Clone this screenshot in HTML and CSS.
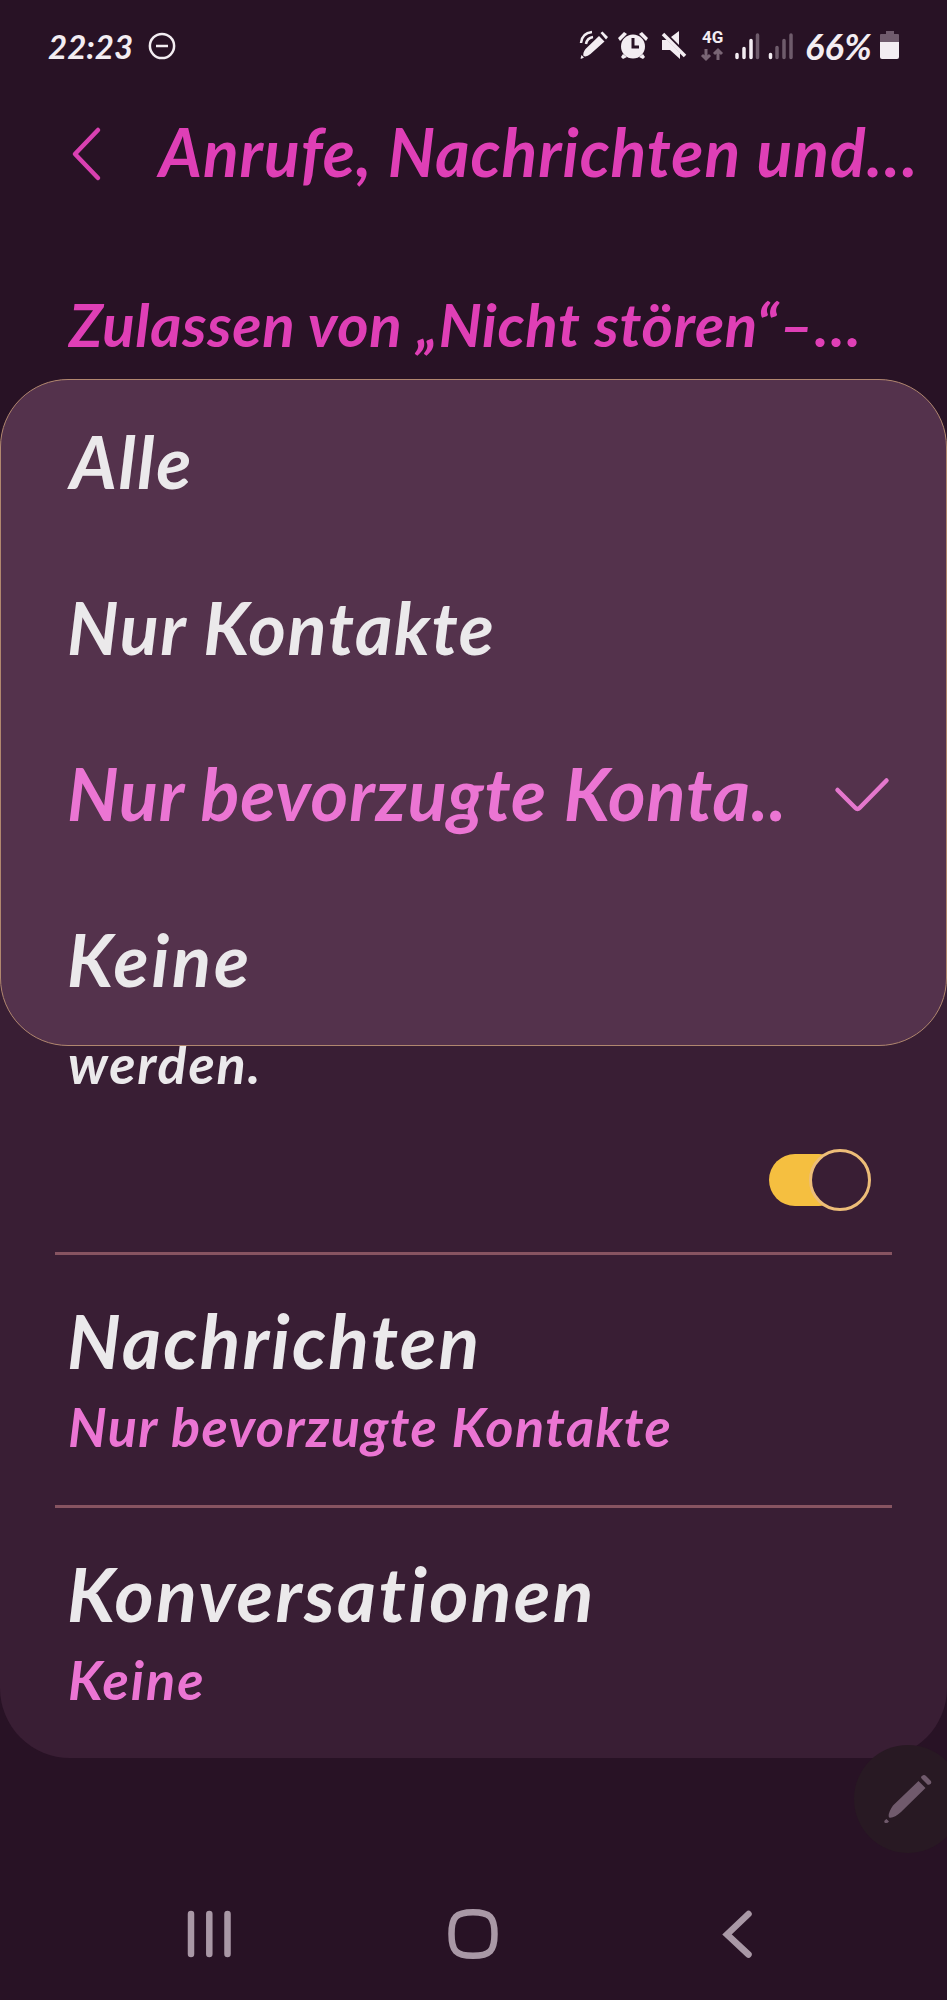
FILE: index.html
```html
<!DOCTYPE html>
<html lang="de">
<head>
<meta charset="utf-8">
<title>Anrufe, Nachrichten und Konversationen</title>
<link rel="stylesheet" href="styles.css">
</head>
<body>
<div class="screen">
  <header class="status">
    <span class="time">22:23</span>
    <svg class="dnd" width="28" height="28" viewBox="0 0 28 28"><circle cx="14" cy="14" r="12.1"/><path d="M8 14h12"/></svg>
    <svg class="status-icons" width="220" height="40" viewBox="580 25 220 40">
      <g class="fill">
        <path d="M600 35l5.500 5.500-14 12.500q-4 3.500-7 2-1-3 2-7zM601.500 32l2-1.500 5.500 5.500-2 2.500zM582.500 54l2.500 2.500q-2 1.500-3.500 1z"/>
        <circle cx="634" cy="45.500" r="12"/>
        <path d="M619 37l6-6 3 2-7 7zM649 37l-6-6-3 2 7 7zM624 53l4 3-4 2-2-2zM644 53l-4 3 4 2 2-2z"/>
        <path d="M663 39h5l13 13v6l-10-9h-8zM680 30v14l-8-8z"/>
      </g>
      <g class="wave"><path d="M582 42q1-10 11-11M587 43q1-6 7-7"/></g>
      <path class="clock" d="M634 37v9h6"/>
      <path class="slash" d="M664 33l22 22"/>
      <path class="dim" d="M707 48v10M703 54l4 4 4-4M719 59v-10M715 53l4-4 4 4"/>
      <path class="bars" d="M738 53.500v3M745 47.500v9M752 39.500v17M771.500 53.500v3"/>
      <path class="bars dim-bar" d="M758.500 34v22.500M778 46.500v10M785 39.500v17M792 34v22.500"/>
    </svg>
    <span class="network">4G</span>
    <span class="percent">66%</span>
    <svg class="battery" width="20" height="30" viewBox="0 0 20 30"><path class="empty" d="M6 1h8v3h4q1 0 1 1v8H0V5q0-1 1-1h5z"/><path class="level" d="M0 12h19v15q0 2-2 2H2q-2 0-2-2z"/></svg>
  </header>

  <div class="title-bar">
    <svg class="back" width="32" height="56" viewBox="0 0 32 56"><path d="M28 4L5 28l23 24"/></svg>
    <h1 class="title">Anrufe, Nachrichten und…</h1>
  </div>
  <h2 class="section">Zulassen von „Nicht stören“–…</h2>

  <main class="card">
    <p class="hint">werden.</p>
    <div class="switch-row"><span class="switch"><span class="track"></span><span class="knob"></span></span></div>
    <section class="entry">
      <div class="name messages">Nachrichten</div>
      <div class="value">Nur bevorzugte Kontakte</div>
    </section>
    <section class="entry last">
      <div class="name conversations">Konversationen</div>
      <div class="value none">Keine</div>
    </section>
  </main>

  <nav class="nav">
    <svg width="40" height="50" viewBox="0 0 40 50"><path d="M4 5v40M22.300 5v40M40.500 5v40"/></svg>
    <svg class="home" width="50" height="50" viewBox="0 0 50 50"><path d="M25 3.200C42 3.200 46.500 8 46.500 25S42 46.800 25 46.800 3.500 42 3.500 25 8 3.200 25 3.200z"/></svg>
    <svg width="30" height="50" viewBox="0 0 30 50"><path d="M24.500 5L3 25.500l21.500 20"/></svg>
  </nav>

  <div class="menu">
    <div class="option all">Alle</div>
    <div class="option contacts">Nur Kontakte</div>
    <div class="option selected"><span class="label">Nur bevorzugte Konta..</span>
      <svg width="56" height="40" viewBox="0 0 56 40"><path d="M2.500 17l18 18q2 2 4 0l27-27.500"/></svg>
    </div>
    <div class="option nobody">Keine</div>
  </div>

  <div class="pen">
    <svg width="52" height="52" viewBox="0 0 52 52"><path d="M35.500 8l7 7-24.500 24q-7 6.500-12 5.500q-1.500-4 4-12zM39 3q2-2 4 0l4.500 4.500q2 3-1 4-2 1-3-1l-4.500-4.500q-2-2 0-3zM3.500 46l2.500 2.500q-2 2.500-4.500 1-1-2 2-3.500z"/></svg>
  </div>
</div>
</body>
</html>
```
FILE: styles.css
```css
* { box-sizing: border-box; }
body { margin: 0; background: #281225; }
h1, h2, p { margin: 0; }
svg { display: block; flex: none; overflow: visible; }
.screen {
  position: relative;
  width: 947px;
  height: 2000px;
  overflow: hidden;
  display: flex;
  flex-direction: column;
  background: #281225;
  color: #ebe9eb;
  font-family: Lato, "Open Sans", sans-serif;
  font-style: italic;
  font-weight: 700;
  white-space: nowrap;
}

.status { height: 92px; display: flex; align-items: center; padding-left: 48px; color: #f3edf2; position: relative; }
.time { width: 100px; font-size: 33px; line-height: 40px; }
.dnd { fill: none; stroke: #f3edf2; stroke-width: 2.5; }
.status-icons { margin-left: 403px; fill: none; }
.fill { fill: #f3edf2; }
.wave { stroke: #f3edf2; stroke-width: 2.5; }
.clock { stroke: #281225; stroke-width: 3; }
.slash { stroke: #f3edf2; stroke-width: 3.5; }
.dim { stroke: #796575; stroke-width: 3; }
.bars { stroke: #f3edf2; stroke-width: 3.5; stroke-linecap: round; }
.dim-bar { stroke: #6e5b6b; }
.network { position: absolute; left: 702px; top: 26px; font: 700 17px/22px Roboto, sans-serif; }
.percent { margin-left: 6px; width: 75px; font-size: 36px; line-height: 44px; letter-spacing: .4px; }
.battery { margin-top: -2px; }
.battery .empty { fill: #705b6d; }
.battery .level { fill: #f3edf2; }

.title-bar { height: 158px; padding: 0 0 35px 70px; display: flex; align-items: center; }
.back { fill: none; stroke: #d940b1; stroke-width: 4.5; stroke-linecap: round; stroke-linejoin: round; }
.title { margin: -3px 0 0 57px; color: #df3fb6; font-size: 66px; line-height: 80px; letter-spacing: 1px; }
.section { height: 129px; padding: 34px 0 0 69px; color: #df3fb6; font-size: 60px; line-height: 80px; letter-spacing: .7px; }

.card { flex: none; height: 1379px; padding-top: 655px; border-radius: 70px; background: #391e34; }
.hint { height: 79px; padding-left: 68px; font-size: 54px; line-height: 60px; letter-spacing: 1.8px; }
.switch-row { height: 139px; padding: 36px 76px 0 0; display: flex; justify-content: flex-end; }
.switch { display: flex; align-items: center; width: 102px; height: 62px; }
.track { flex: none; width: 76px; height: 52px; border-radius: 26px; background: #f5bf40; }
.knob { flex: none; width: 62px; height: 62px; margin-left: -36px; border: 3px solid #edbd78; border-radius: 50%; background: #391e34; }
.entry { margin: 0 55px; height: 253px; padding: 43px 0 0 12px; border-top: 3px solid #875461; }
.name { font-size: 75px; line-height: 84px; }
.messages { letter-spacing: 2.3px; }
.conversations { letter-spacing: 2.4px; }
.value { margin-top: 7px; padding-left: 1px; font-size: 54px; line-height: 76px; letter-spacing: 1.4px; color: #eb75d3; }
.none { letter-spacing: 2px; }

.nav { flex: none; display: flex; align-items: center; justify-content: space-between; height: 50px; margin-top: 151px; padding: 0 193px 0 187px; fill: none; stroke: #a998a6; stroke-width: 6.5; stroke-linecap: round; }
.home { margin-right: 5px; }

.menu { position: absolute; left: 0; top: 379px; width: 947px; height: 667px; border: 1px solid #b1876f; border-radius: 68px; background: #54324c; display: grid; grid-template-rows: repeat(4, 1fr); }
.option { display: flex; align-items: center; padding: 0 55px 5px 66px; font-size: 72px; line-height: 86px; }
.all { padding-left: 69px; letter-spacing: 1.7px; }
.contacts { letter-spacing: 1.6px; }
.selected { justify-content: space-between; letter-spacing: .9px; color: #eb75d3; }
.selected svg { fill: none; stroke: #e477cd; stroke-width: 4.5; stroke-linecap: round; }
.nobody { letter-spacing: 3px; }

.pen { position: absolute; left: 854px; top: 1745px; width: 108px; height: 108px; border-radius: 50%; background: #281923; display: flex; align-items: center; padding-left: 29px; }
.pen svg { fill: #705a6c; }
```
